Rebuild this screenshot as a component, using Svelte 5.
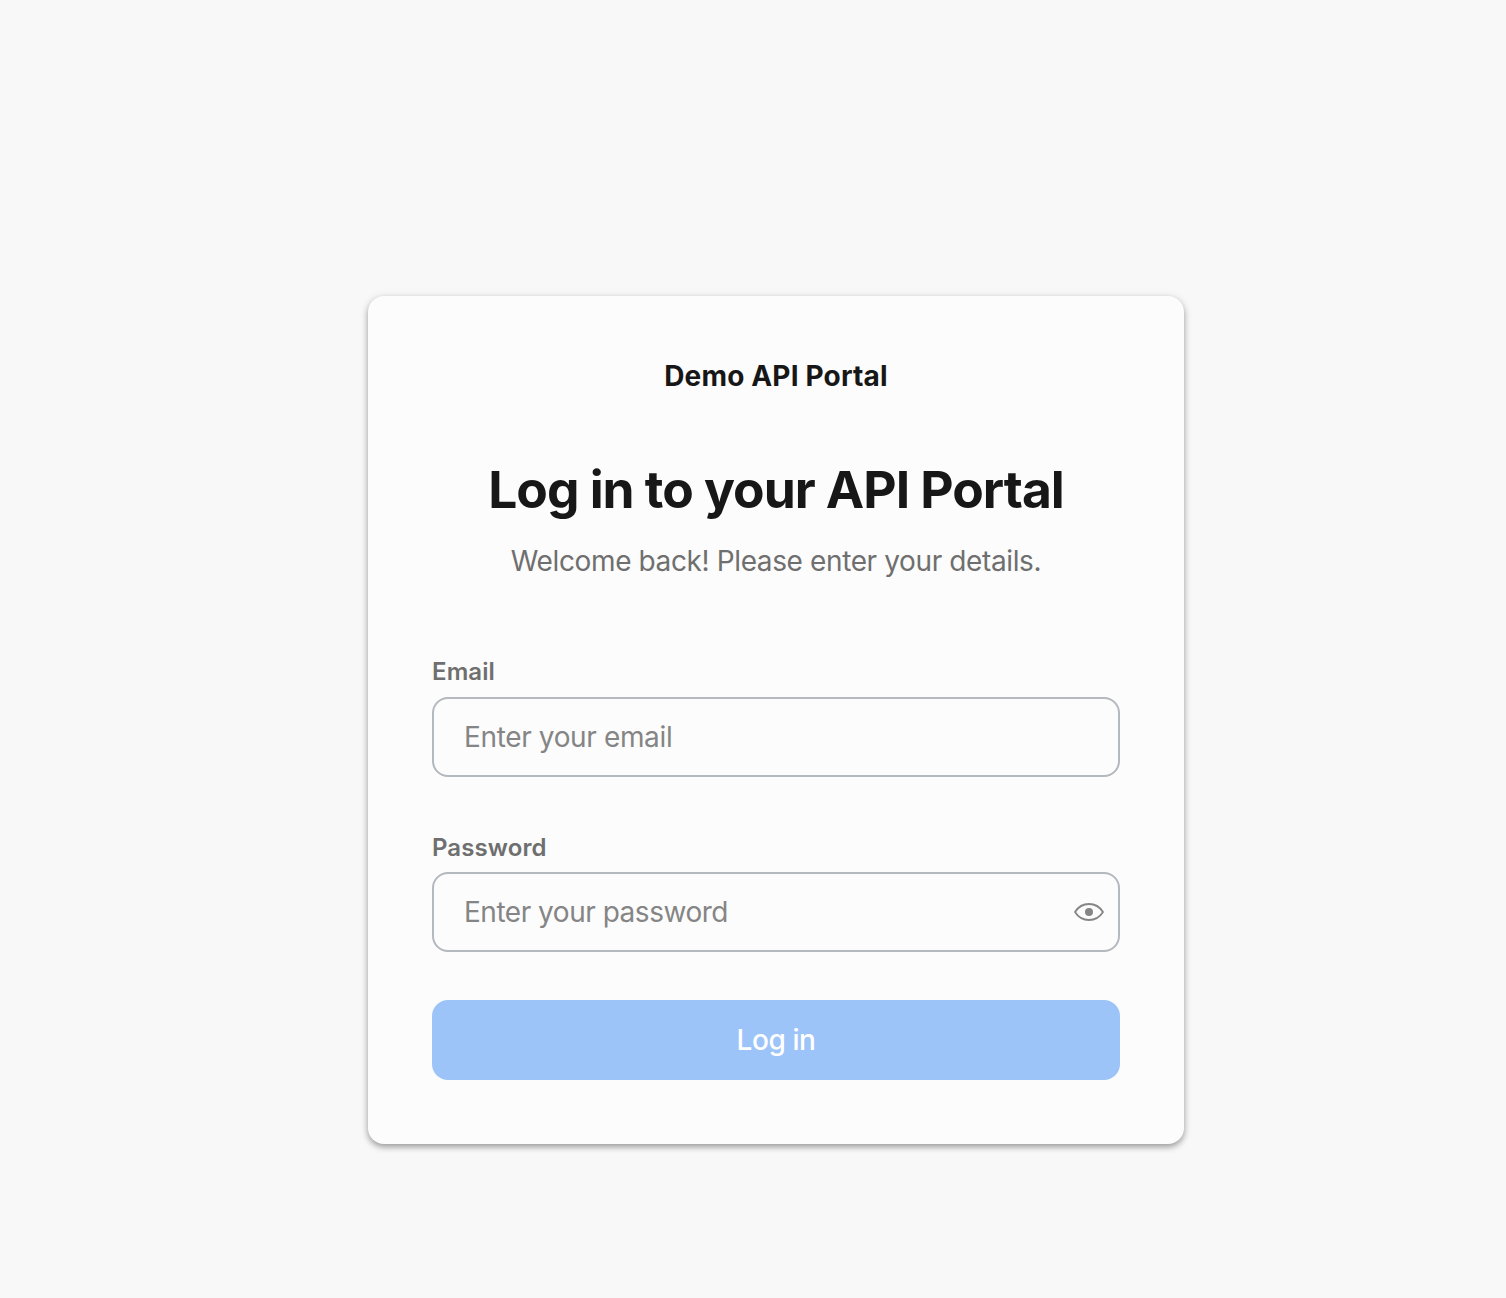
<script>
  let email = $state('');
  let password = $state('');
  let visible = $state(false);
</script>

<main>
  <section class="card">
    <p class="brand">Demo API Portal</p>
    <h1>Log in to your API Portal</h1>
    <p class="sub">Welcome back! Please enter your details.</p>

    <form onsubmit={(e) => e.preventDefault()}>
      <label for="email">Email</label>
      <div class="field">
        <input id="email" type="email" placeholder="Enter your email" bind:value={email} />
      </div>

      <label class="lower" for="password">Password</label>
      <div class="field">
        <input
          id="password"
          type={visible ? 'text' : 'password'}
          placeholder="Enter your password"
          bind:value={password}
        />
        <button class="eye" type="button" aria-label="Show password" onclick={() => (visible = !visible)}>
          <svg width="32" height="32" viewBox="0 0 32 32" fill="none">
            <path
              d="M2 16C5 11.200 10 8 16 8s11 3.200 14 8c-3 4.800-8 8-14 8S5 20.800 2 16Z"
              stroke="#858585"
              stroke-width="1.800"
              stroke-linejoin="round"
            />
            <circle cx="16" cy="16" r="4" fill="#858585" />
          </svg>
        </button>
      </div>

      <button class="submit" type="submit">Log in</button>
    </form>
  </section>
</main>

<style>
  :global(body) {
    background: #f8f8f8;
  }
  main {
    box-sizing: border-box;
    min-height: 1298px;
    padding: 296px 0 0 368px;
    font-family: Inter, sans-serif;
    color: #171717;
  }
  .card {
    box-sizing: border-box;
    width: 816px;
    height: 848px;
    padding: 60px 64px 64px;
    border-radius: 16px;
    background: #fcfcfc;
    box-shadow: 0 3px 6px rgba(0, 0, 0, 0.36), 0 0 12px rgba(0, 0, 0, 0.05);
  }
  p,
  h1 {
    margin: 0;
    text-align: center;
    white-space: nowrap;
  }
  .brand {
    font-size: 28px;
    line-height: 40px;
    font-weight: 700;
    letter-spacing: 0.17px;
  }
  h1 {
    margin-top: 61px;
    font-size: 51.5px;
    line-height: 64px;
    font-weight: 700;
    letter-spacing: -1px;
  }
  .sub {
    margin-top: 20px;
    font-size: 28px;
    line-height: 40px;
    letter-spacing: -0.38px;
    color: #6f6f6f;
  }
  form {
    display: flex;
    flex-direction: column;
    margin-top: 75px;
  }
  label {
    height: 32px;
    margin-bottom: 9px;
    font-size: 24px;
    line-height: 32px;
    font-weight: 600;
    letter-spacing: 0.1px;
    color: #6f6f6f;
  }
  .lower {
    margin: 1px 0 8px;
  }
  .field {
    box-sizing: border-box;
    display: flex;
    align-items: center;
    height: 80px;
    margin-bottom: 54px;
    padding: 0 13px 0 30px;
    border: 2px solid #b4b8bf;
    border-radius: 16px;
  }
  .field:last-of-type {
    margin-bottom: 48px;
  }
  input {
    flex: 1;
    min-width: 0;
    padding: 0;
    border: 0;
    outline: 0;
    background: none;
    font: 400 28px/40px Inter, sans-serif;
    letter-spacing: -0.36px;
    color: #171717;
  }
  input::placeholder {
    color: #858585;
    opacity: 1;
  }
  #password {
    letter-spacing: -0.48px;
  }
  .eye {
    display: flex;
    padding: 0;
    border: 0;
    background: none;
  }
  .submit {
    height: 80px;
    padding: 0;
    border: 0;
    border-radius: 16px;
    background: #9dc4f9;
    color: #fff;
    font: 550 28px/40px Inter, sans-serif;
    letter-spacing: -0.4px;
  }
</style>
